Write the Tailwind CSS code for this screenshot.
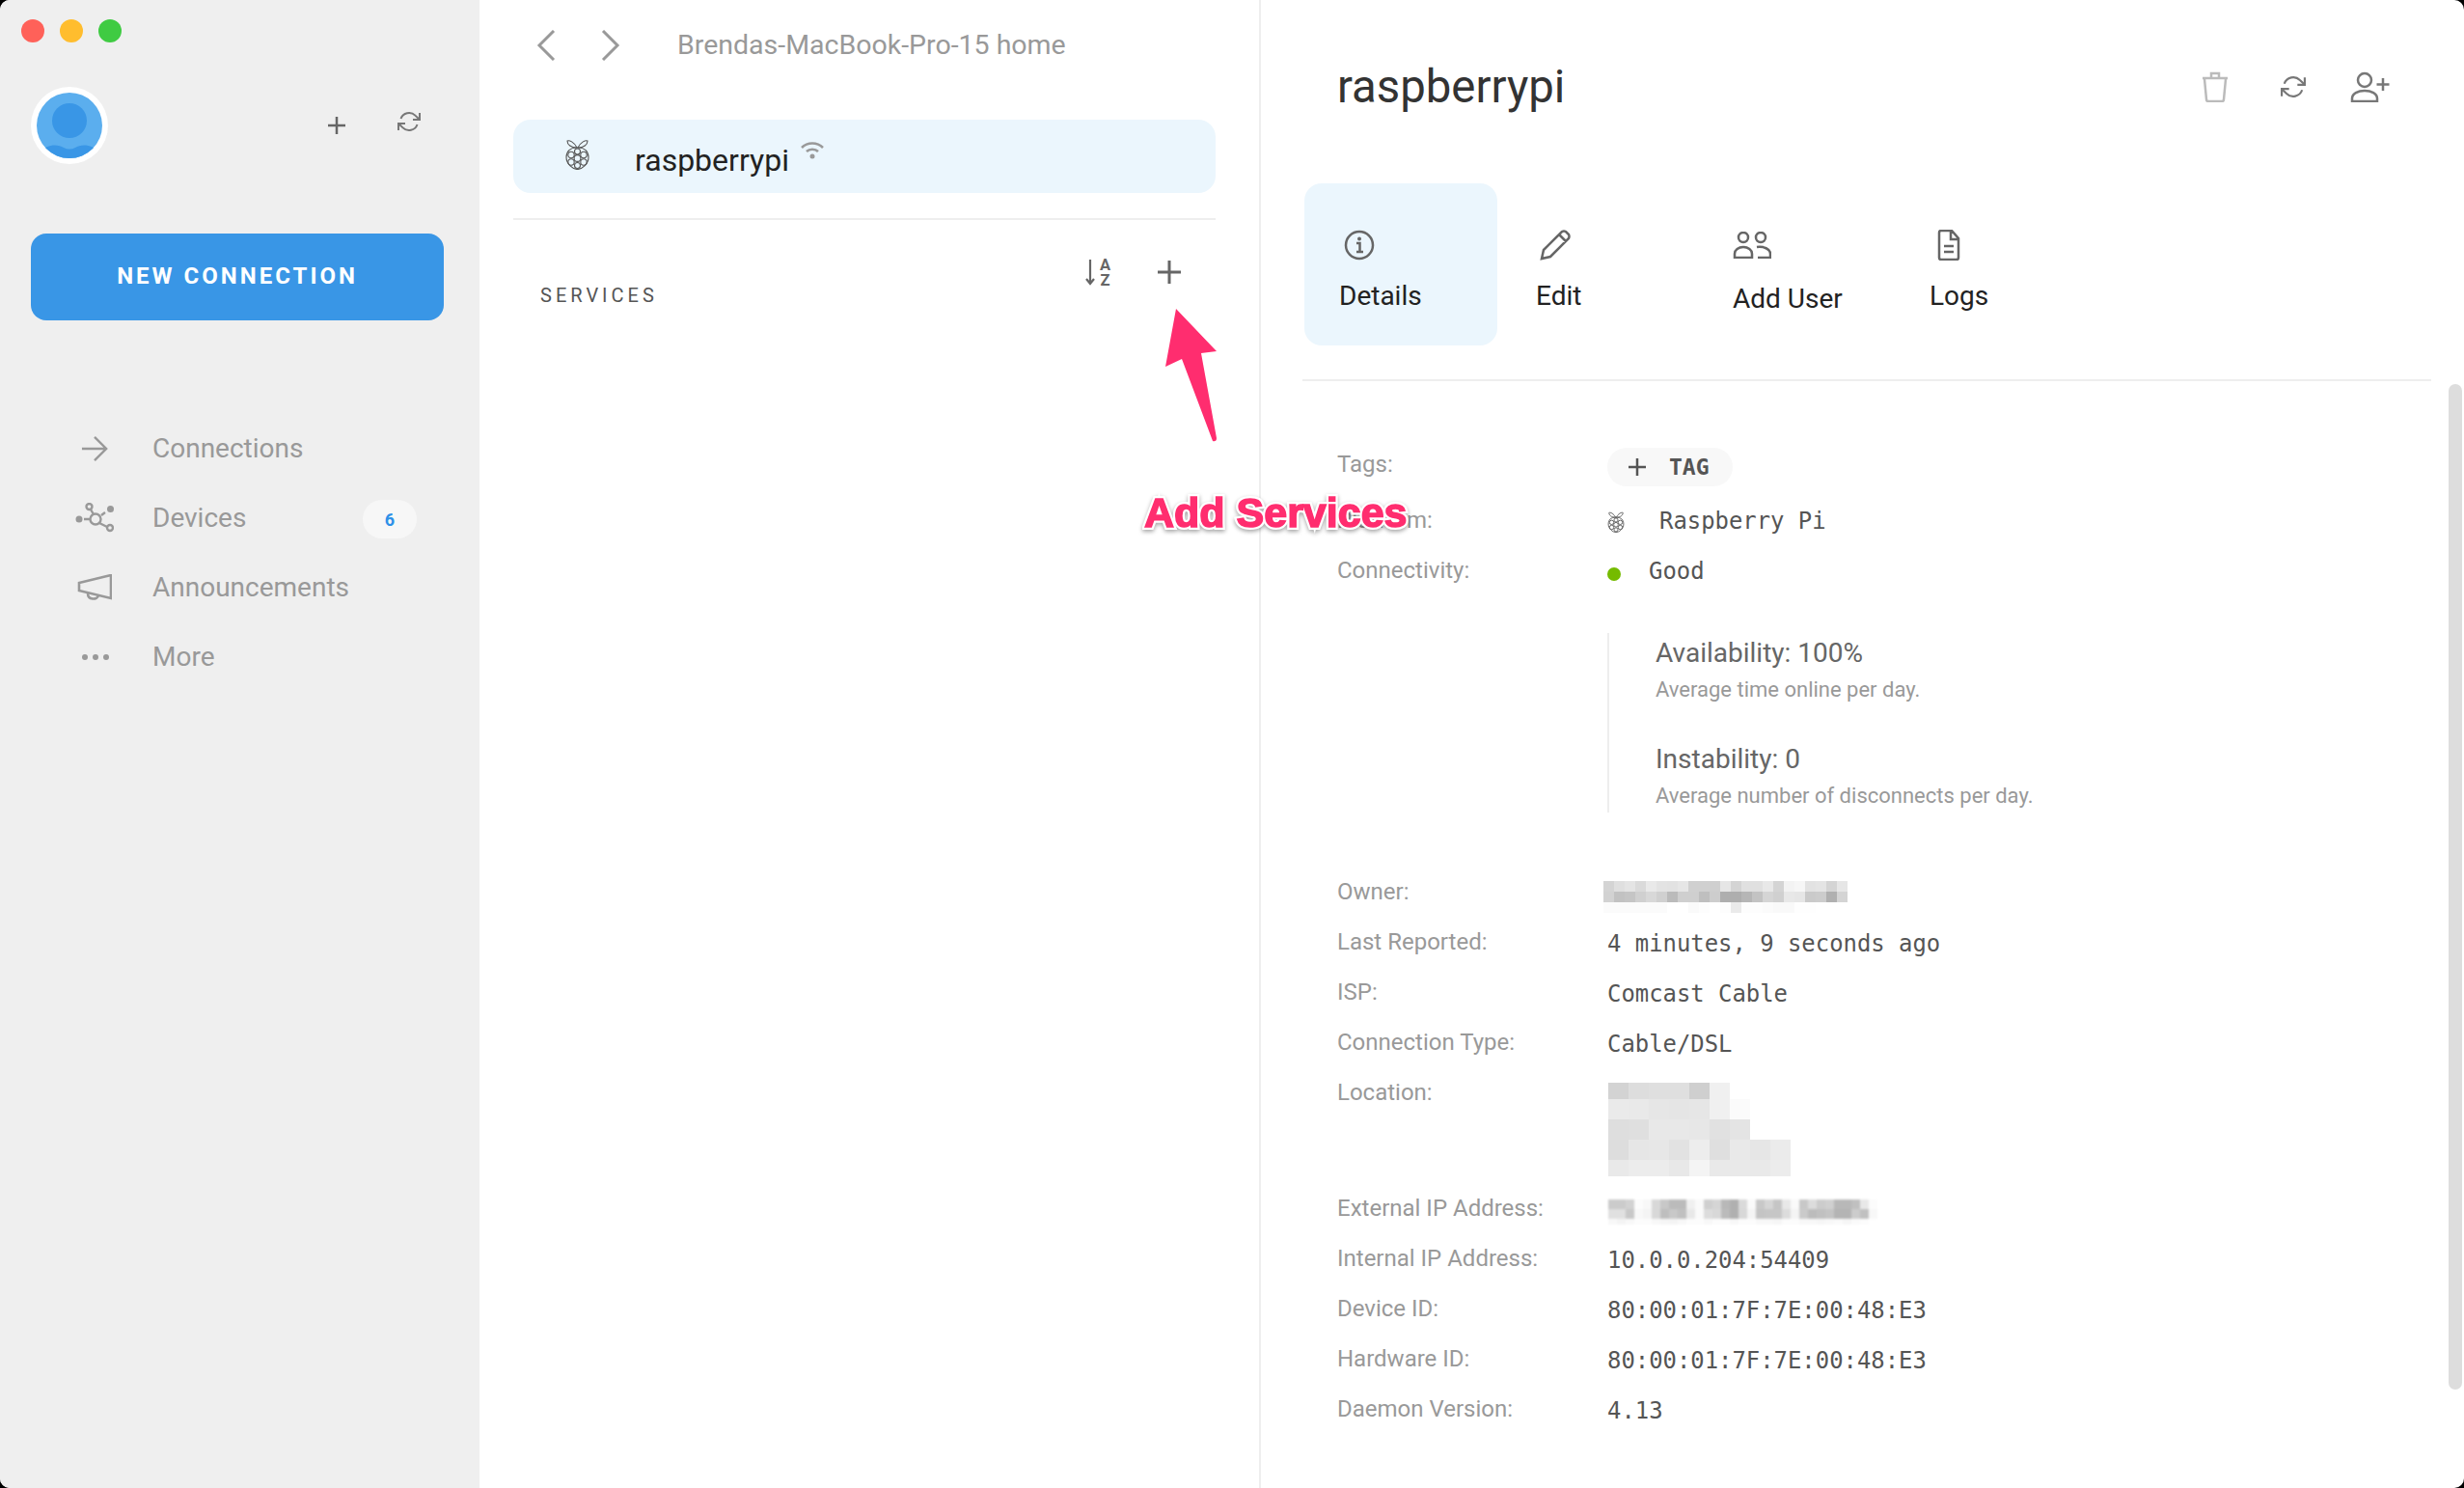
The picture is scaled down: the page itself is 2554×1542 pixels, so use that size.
<!DOCTYPE html>
<html lang="en">
<head>
  <meta charset="UTF-8">
  <title>Remote.It - raspberrypi</title>
  <script src="https://cdn.jsdelivr.net/npm/@tailwindcss/browser@4"></script>
</head>
<body class="bg-black font-['Roboto',sans-serif] overflow-hidden">
  <div class="relative flex w-[2554px] h-[1542px] bg-white rounded-[10px] overflow-hidden">

    <!-- sidebar -->
    <aside class="w-[497px] shrink-0 bg-[#efefef] flex flex-col">
      <div class="flex gap-4 pl-[22px] pt-5">
        <div class="w-6 h-6 rounded-full bg-[#ff6159]"></div>
        <div class="w-6 h-6 rounded-full bg-[#ffbd2e]"></div>
        <div class="w-6 h-6 rounded-full bg-[#3fcb42]"></div>
      </div>

      <div class="flex items-center mt-[46px] pl-8">
        <svg class="w-20 h-20" viewBox="0 0 80 80">
          <defs><clipPath id="av"><circle cx="40" cy="40" r="34"/></clipPath></defs>
          <circle cx="40" cy="40" r="40" fill="#fff"/>
          <circle cx="40" cy="40" r="34" fill="#5baeee"/>
          <circle cx="40" cy="35" r="18" fill="#3996e6"/>
          <path clip-path="url(#av)" d="M10 80V68c6-9 18-9 24-5 4 2 8 2 12 0 6-4 18-4 24 5v12z" fill="#3996e6"/>
        </svg>
        <svg class="w-[18px] h-[18px] ml-[228px]" viewBox="0 0 18 18" fill="none" stroke="#666" stroke-width="2.5"><path d="M9 0v18M0 9h18"/></svg>
        <svg class="w-6 h-6 ml-[54px] -mt-2" viewBox="0 0 24 24" fill="none" stroke="#777" stroke-width="2"><path d="M23 3v7h-7M1 21v-7h7"/><path d="M3.5 9a9 9 0 0 1 14.9-3.4L23 10M1 14l4.6 4.4A9 9 0 0 0 20.5 15"/></svg>
      </div>

      <button class="mt-[72px] mx-8 w-[428px] h-[90px] shrink-0 rounded-2xl bg-[#3996e6] text-white text-[24px] font-bold tracking-[0.125em] pb-[2px]">NEW CONNECTION</button>

      <nav class="mt-[97px] text-[#999] text-[28px]">
        <div class="flex items-center h-[72px]">
          <div class="w-[158px] flex pl-[84px]">
            <svg class="w-[28px] h-[28px]" viewBox="0 0 30 30" fill="none" stroke="#999" stroke-width="2.6"><path d="M1 15h27M15 2l13 13-13 13"/></svg>
          </div>
          <span>Connections</span>
        </div>
        <div class="flex items-center h-[72px]">
          <div class="w-[158px] flex pl-[78px]">
            <svg class="w-10 h-8" viewBox="0 0 40 32" fill="none" stroke="#999" stroke-width="2.4">
              <circle cx="21" cy="17" r="5.5"/><circle cx="14.5" cy="4" r="3"/><circle cx="36" cy="26" r="3"/>
              <circle cx="4" cy="17" r="3.5" fill="#999" stroke="none"/><circle cx="36.500" cy="6.500" r="3.500" fill="#999" stroke="none"/>
              <path d="M16 7l3 5M25 21l8 4M9 17h6M27 13l4-3"/>
            </svg>
          </div>
          <span>Devices</span>
          <span class="ml-auto mr-[65px] mt-[2px] w-14 h-10 rounded-full bg-[#f7f7f7] flex items-center justify-center text-[#2d90e8] text-[18px] font-bold">6</span>
        </div>
        <div class="flex items-center h-[72px]">
          <div class="w-[158px] flex pl-[80px]">
            <svg class="w-9 h-7" viewBox="0 0 36 28" fill="none" stroke="#999" stroke-width="2.6"><path d="M2 9v8l33 8V1z"/><path d="M11 20c0 7 10 7 11 2"/></svg>
          </div>
          <span>Announcements</span>
        </div>
        <div class="flex items-center h-[72px]">
          <div class="w-[158px] flex gap-[5px] pl-[85px]">
            <div class="w-[6px] h-[6px] rounded-full bg-[#999]"></div>
            <div class="w-[6px] h-[6px] rounded-full bg-[#999]"></div>
            <div class="w-[6px] h-[6px] rounded-full bg-[#999]"></div>
          </div>
          <span>More</span>
        </div>
      </nav>
    </aside>

    <!-- device column -->
    <section class="w-[810px] shrink-0 border-r-2 border-[#eeeeee]">
      <div class="flex items-center pt-[31px] pl-[59px]">
        <svg class="w-5 h-8" viewBox="0 0 20 32" fill="none" stroke="#999" stroke-width="3"><path d="M18 1L3 16l15 15"/></svg>
        <svg class="w-5 h-8 ml-[47px]" viewBox="0 0 20 32" fill="none" stroke="#999" stroke-width="3"><path d="M2 1l15 15L2 31"/></svg>
        <span class="ml-[59px] text-[#999] text-[28.5px] leading-8">Brendas-MacBook-Pro-15 home</span>
      </div>

      <div class="mt-[61px] ml-[35px] w-[728px] h-[76px] rounded-[18px] bg-[#ebf6fd] flex items-start relative">
        <svg class="absolute left-[54px] top-5 w-[25px] h-8" viewBox="0 0 25 32" fill="none" stroke="#555" stroke-width="1.100">
          <path d="M12 9C9 3 4 1 2 2c0 4 4 7 10 7zM13 9c3-6 8-8 10-7 0 4-4 7-10 7z"/>
          <path d="M12.500 9C20 8.500 24 13 24 19c0 7-7 12.500-11.500 12.500S1 26 1 19C1 13 5 8.500 12.500 9z"/>
          <circle cx="12.500" cy="20" r="3.400"/><circle cx="6" cy="16.500" r="3.200"/><circle cx="19" cy="16.500" r="3.200"/>
          <circle cx="6" cy="24" r="3.200"/><circle cx="19" cy="24" r="3.200"/><circle cx="12.500" cy="13" r="3"/><circle cx="12.500" cy="27.500" r="3"/>
        </svg>
        <span class="ml-[126px] mt-[24px] text-[#222] text-[32px] leading-9">raspberrypi</span>
        <svg class="ml-3 mt-[23px] w-6 h-[18px]" viewBox="0 0 24 18" fill="none" stroke="#999" stroke-width="2.600"><path d="M1 6c6-6 16-6 22 0M6 10c3-3 9-3 12 0"/><circle cx="12" cy="15" r="2.500" fill="#999" stroke="none"/></svg>
      </div>

      <div class="mt-[26px] ml-[35px] w-[728px] h-[2px] bg-[#eeeeee]"></div>

      <div class="flex items-start ml-[63px] w-[664px] mt-[40px]">
        <span class="mt-[27px] text-[#555] text-[20px] leading-[22px] tracking-[0.2em]">SERVICES</span>
        <svg class="ml-auto w-7 h-7 overflow-visible" viewBox="0 0 28 28" fill="none" stroke="#666" stroke-width="2.200">
          <path d="M5 1v25M1 21l4 5 4-5"/>
          <text x="15" y="12" font-size="16.500" font-weight="700" fill="#666" stroke="none" font-family="Roboto">A</text>
          <text x="15.500" y="28" font-size="16.500" font-weight="700" fill="#666" stroke="none" font-family="Roboto">Z</text>
        </svg>
        <svg class="ml-[47px] mt-[2px] w-6 h-6" viewBox="0 0 24 24" fill="none" stroke="#666" stroke-width="3"><path d="M12 0v24M0 12h24"/></svg>
      </div>
    </section>

    <!-- details column -->
    <section class="flex-1 relative">
      <div class="flex items-center h-[60px] mt-[60px] pl-[79px]">
        <h1 class="text-[#333] text-[47.3px]">raspberrypi</h1>
        <svg class="ml-auto w-7 h-8" viewBox="0 0 28 32" fill="none" stroke="#bbb" stroke-width="2.500"><path d="M3 8l2 21q0 2 2 2h14q2 0 2-2l2-21M1 7h26M10 7V2h8v5"/></svg>
        <svg class="ml-[54px] w-[26px] h-[26px]" viewBox="0 0 24 24" fill="none" stroke="#777" stroke-width="2"><path d="M23 3v7h-7M1 21v-7h7"/><path d="M3.500 9a9 9 0 0 1 14.900-3.400L23 10M1 14l4.600 4.400A9 9 0 0 0 20.500 15"/></svg>
        <svg class="ml-[46px] mr-[77px] w-[41px] h-8" viewBox="0 0 41 32" fill="none" stroke="#777" stroke-width="2.500"><circle cx="15" cy="9" r="7"/><path d="M2 31v-3c0-5 6-8 13-8s13 3 13 8v3z"/><path d="M34 7v13M27.500 13.500h13"/></svg>
      </div>

      <div class="flex gap-1 ml-[45px] mt-[70px] h-[168px]">
        <div class="w-[200px] pl-[36px] pt-12 rounded-[18px] bg-[#ebf6fd]">
          <svg class="ml-[5px] w-8 h-8" viewBox="0 0 32 32" fill="none" stroke="#666" stroke-width="2.500"><circle cx="16" cy="16" r="14"/><path d="M13 14h3.500v9M13 23h7"/><circle cx="16" cy="9.500" r="2" fill="#666" stroke="none"/></svg>
          <div class="mt-[22px] text-[#222] text-[28px] leading-[30px]">Details</div>
        </div>
        <div class="w-[200px] pl-[36px] pt-12">
          <svg class="ml-1 w-8 h-8" viewBox="0 0 32 32" fill="none" stroke="#666" stroke-width="2.500"><path d="M2 30l2-9L23 2q2-1 4 0l3 3q1 2 0 4L11 28zM20 5l7 7"/></svg>
          <div class="mt-[22px] text-[#222] text-[28px] leading-[30px]">Edit</div>
        </div>
        <div class="w-[200px] pl-[36px] pt-[50px]">
          <svg class="w-10 h-7" viewBox="0 0 40 28" fill="none" stroke="#666" stroke-width="2.500"><circle cx="11" cy="6" r="5"/><circle cx="29" cy="6" r="5"/><path d="M2 27v-4c0-4 4-7 9-7s9 3 9 7v4zM25 16c7-1 14 2 14 7v4H26"/></svg>
          <div class="mt-[27px] text-[#222] text-[28px] leading-[30px]">Add User</div>
        </div>
        <div class="w-[200px] pl-[36px] pt-12">
          <svg class="ml-2 w-6 h-8" viewBox="0 0 24 32" fill="none" stroke="#666" stroke-width="2.500"><path d="M2 3q0-2 2-2h11l7 8v20q0 2-2 2H4q-2 0-2-2zM14 1v9h8M7 17h10M7 23h10"/></svg>
          <div class="mt-[22px] text-[#222] text-[28px] leading-[30px]">Logs</div>
        </div>
      </div>

      <div class="ml-[43px] mt-[35px] w-[1170px] h-[2px] bg-[#eeeeee]"></div>

      <!-- attribute rows -->
      <div class="pl-[79px] pt-[72px] text-[#999] text-[24px] leading-7">
        <div class="flex h-[58px]">
          <span class="w-[280px]">Tags:</span>
          <div class="-mt-[3px] w-[130px] h-10 rounded-full bg-[#f8f8f8] flex items-center pl-[22px]">
            <svg class="w-[18px] h-[18px]" viewBox="0 0 18 18" fill="none" stroke="#555" stroke-width="2.500"><path d="M9 0v18M0 9h18"/></svg>
            <span class="ml-6 font-['DejaVu_Sans_Mono',monospace] font-bold text-[#555] text-[23px]">TAG</span>
          </div>
        </div>
        <div class="flex h-[52px]">
          <span class="w-[280px]">Platform:</span>
          <svg class="w-[18px] h-[22px] mt-[5px]" viewBox="0 0 25 32" fill="none" stroke="#555" stroke-width="1.300">
            <path d="M12 9C9 3 4 1 2 2c0 4 4 7 10 7zM13 9c3-6 8-8 10-7 0 4-4 7-10 7z"/>
            <path d="M12.500 9C20 8.500 24 13 24 19c0 7-7 12.500-11.500 12.500S1 26 1 19C1 13 5 8.500 12.500 9z"/>
            <circle cx="12.500" cy="20" r="3.400"/><circle cx="6" cy="16.500" r="3.200"/><circle cx="19" cy="16.500" r="3.200"/>
            <circle cx="6" cy="24" r="3.200"/><circle cx="19" cy="24" r="3.200"/><circle cx="12.500" cy="13" r="3"/><circle cx="12.500" cy="27.500" r="3"/>
          </svg>
          <span class="ml-9 mt-[1px] font-['DejaVu_Sans_Mono',monospace] text-[#555] text-[23.9px]">Raspberry Pi</span>
        </div>
        <div class="flex h-[79px]">
          <span class="w-[280px]">Connectivity:</span>
          <div class="w-[14px] h-[14px] mt-[11px] rounded-full bg-[#75bb00]"></div>
          <span class="ml-[29px] mt-[1px] font-['DejaVu_Sans_Mono',monospace] text-[#555] text-[23.9px]">Good</span>
        </div>

        <div class="ml-[280px] h-[186px] border-l-2 border-[#eeeeee] pl-[48px] pt-[5px]">
          <div class="text-[#666] text-[28px] leading-8">Availability: 100%</div>
          <div class="mt-2 text-[#999] text-[22px]">Average time online per day.</div>
          <div class="mt-[42px] text-[#666] text-[28px] leading-8">Instability: 0</div>
          <div class="mt-2 text-[#999] text-[22px]">Average number of disconnects per day.</div>
        </div>

        <div class="flex h-[52px] mt-[68px]">
          <span class="w-[276px]">Owner:</span>
          <svg id="mosaic-owner" class="mt-[3px]" width="253" height="33" shape-rendering="crispEdges"></svg>
        </div>
        <div class="flex h-[52px]">
          <span class="w-[280px]">Last Reported:</span>
          <span class="mt-[2px] font-['DejaVu_Sans_Mono',monospace] text-[#555] text-[23.9px]">4 minutes, 9 seconds ago</span>
        </div>
        <div class="flex h-[52px]">
          <span class="w-[280px]">ISP:</span>
          <span class="mt-[2px] font-['DejaVu_Sans_Mono',monospace] text-[#555] text-[23.9px]">Comcast Cable</span>
        </div>
        <div class="flex h-[52px]">
          <span class="w-[280px]">Connection Type:</span>
          <span class="mt-[2px] font-['DejaVu_Sans_Mono',monospace] text-[#555] text-[23.9px]">Cable/DSL</span>
        </div>
        <div class="flex h-[120px]">
          <span class="w-[281px]">Location:</span>
          <svg id="mosaic-location" class="mt-[4px]" width="189" height="97" shape-rendering="crispEdges"></svg>
        </div>
        <div class="flex h-[52px]">
          <span class="w-[281px]">External IP Address:</span>
          <svg id="mosaic-external" class="mt-[5px] blur-[1px]" width="279" height="26" shape-rendering="crispEdges"></svg>
        </div>
        <div class="flex h-[52px]">
          <span class="w-[280px]">Internal IP Address:</span>
          <span class="mt-[2px] font-['DejaVu_Sans_Mono',monospace] text-[#555] text-[23.9px]">10.0.0.204:54409</span>
        </div>
        <div class="flex h-[52px]">
          <span class="w-[280px]">Device ID:</span>
          <span class="mt-[2px] font-['DejaVu_Sans_Mono',monospace] text-[#555] text-[23.9px]">80:00:01:7F:7E:00:48:E3</span>
        </div>
        <div class="flex h-[52px]">
          <span class="w-[280px]">Hardware ID:</span>
          <span class="mt-[2px] font-['DejaVu_Sans_Mono',monospace] text-[#555] text-[23.9px]">80:00:01:7F:7E:00:48:E3</span>
        </div>
        <div class="flex h-[52px]">
          <span class="w-[280px]">Daemon Version:</span>
          <span class="mt-[2px] font-['DejaVu_Sans_Mono',monospace] text-[#555] text-[23.9px]">4.13</span>
        </div>
      </div>

      <!-- scrollbar -->
      <div class="absolute right-[2px] top-[398px] w-[14px] h-[1042px] rounded-full bg-[#dddddd]"></div>
    </section>

    <!-- annotation drawn over the screenshot -->
    <svg class="absolute left-[1190px] top-[310px] w-[90px] h-[160px]" viewBox="1190 310 90 160">
      <path d="M1219 320L1261 364 1245 366 1261 454Q1261 458 1257 457L1225 372 1208 380z" fill="#ff2d6f"/>
    </svg>
    <div class="absolute left-[1186px] top-[505px] text-[43px] leading-[52px] font-bold text-[#ff2d6f] font-['Liberation_Sans',sans-serif] [-webkit-text-stroke:6px_white] [paint-order:stroke_fill] drop-shadow-[0_2px_2px_rgba(0,0,0,0.35)] after:content-['Add_Services'] after:absolute after:left-0 after:top-0 after:[-webkit-text-stroke:1.5px_#ff2d6f]">Add Services</div>
  </div>

  <script>
    // pixelated (redacted) values, rows of grey levels
    function mosaic(id, rows, cellW, rowH) {
      const svg = document.getElementById(id);
      let y = 0;
      rows.forEach((row, r) => {
        const h = Array.isArray(rowH) ? rowH[r] : rowH;
        row.split(' ').forEach((g, c) => {
          const rect = document.createElementNS('http://www.w3.org/2000/svg', 'rect');
          rect.setAttribute('x', c * cellW);
          rect.setAttribute('y', y);
          rect.setAttribute('width', cellW);
          rect.setAttribute('height', h);
          rect.setAttribute('fill', '#' + g + g + g);
          svg.appendChild(rect);
        });
        y += h;
      });
    }

    mosaic('mosaic-owner', [
      'd4 df e4 da e9 e3 e2 e6 d0 d0 cf e6 d4 e0 e0 e8 d4 f3 f6 e2 e4 d4 e6',
      'd2 c2 c5 d0 d8 d0 bb cf cf bf cd ae ae b6 c3 d5 d0 e8 e6 ca cc b0 d4',
      'fb fb fb fb fb fb ff ff fa fd ff fd ea fd fd fb f9 f9 fe fe ff ff ff'
    ], 11, 11);

    mosaic('mosaic-location', [
      'd3 dd df df cf f0 ff ff ff',
      'ea e9 e6 e5 e6 f0 fb ff ff',
      'de df e8 e8 e7 e1 e4 ff ff',
      'dd e6 e7 e2 ed df e9 e6 eb',
      'e9 ec ec e8 f4 e9 e9 e9 ec'
    ], 21, [17, 21, 21, 21, 17]);

    mosaic('mosaic-external', [
      'cb cb d2 fc f8 d8 c8 bb bb f0 fa cf d5 b8 b0 da fa c8 d5 c5 e8 fa c8 dc cc d0 b8 b8 c0 e8 fc',
      'e0 e0 c8 f8 f4 d8 be c8 c0 e8 fa dc d8 bb b0 d8 f4 c4 c6 c6 dc f4 ca bc c0 c4 b4 b4 cc c0 f8',
      'f8 f4 f8 fc fc f8 f6 f4 f8 fc fc f8 fc fc f8 fc fc f8 f8 f6 fc fc f8 f8 f6 f8 fa f6 fa fc ff'
    ], 9, [10, 10, 6]);
  </script>
</body>
</html>
